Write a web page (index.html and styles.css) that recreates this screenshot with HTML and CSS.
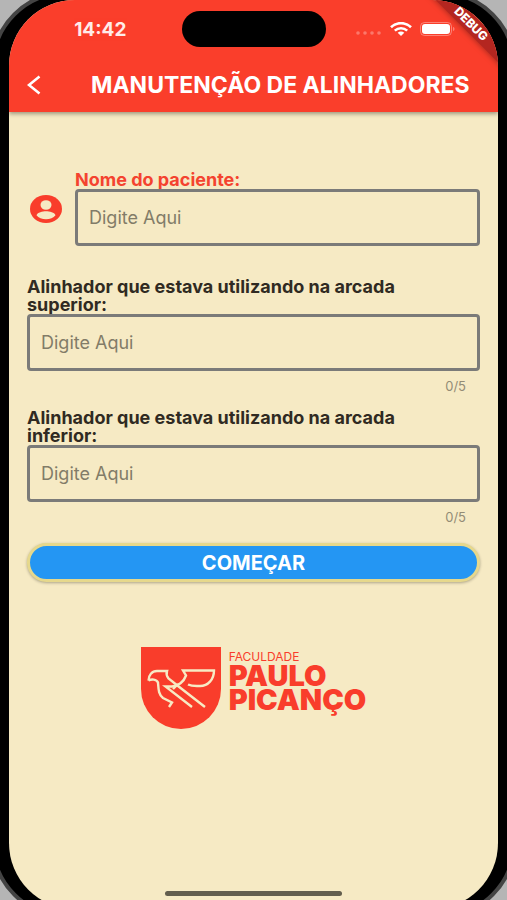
FILE: index.html
```html
<!doctype html>
<html lang="pt-BR">
  <head>
    <meta charset="UTF-8" />
    <meta name="viewport" content="width=device-width, initial-scale=1.0" />
    <title>Manutenção de Alinhadores</title>
    <link rel="stylesheet" href="styles.css">
  </head>
  <body>
    <div class="phone">
      <div class="screen">
        <header class="app-bar">
          <div class="status-bar">
            <span class="time">14:42</span>
            <div class="island"></div>
            <div class="status-icons">
              <svg class="signal" viewBox="0 0 26 4" width="26" height="4">
                <g fill="#fff" opacity="0.3">
                  <circle cx="2" cy="2" r="1.8" />
                  <circle cx="9" cy="2" r="1.8" />
                  <circle cx="16" cy="2" r="1.8" />
                  <circle cx="23" cy="2" r="1.8" />
                </g>
              </svg>
              <svg viewBox="0 0 22 14" width="22" height="14">
                <g fill="none" stroke="#fff" stroke-width="2.6">
                  <path d="M1 5.2C6.5-.2 15.500-.2 21 5.200" />
                  <path d="M4.800 8.600c3.500-3.200 8.900-3.200 12.400 0" />
                </g>
                <path d="M11 14l-3.300-3.200c1.800-1.600 4.800-1.600 6.600 0z" fill="#fff" />
              </svg>
              <svg viewBox="0 0 36 14" width="36" height="14">
                <rect x="0.500" y="0.500" width="31" height="13" rx="4" fill="none" stroke="#fff" opacity="0.35" />
                <rect x="2" y="2" width="28" height="10" rx="3" fill="#fff" />
                <path d="M33 5c2 .5 2 3.500 0 4z" fill="#fff" opacity="0.35" />
              </svg>
            </div>
          </div>
          <div class="toolbar">
            <button class="back" aria-label="Voltar">
              <svg viewBox="0 0 14 20" width="14" height="20">
                <path d="M12.500 1.500L2 10l10.500 8.500" fill="none" stroke="#fff" stroke-width="2.600" />
              </svg>
            </button>
            <h1>MANUTENÇÃO DE ALINHADORES</h1>
          </div>
          <div class="debug">DEBUG</div>
        </header>

        <main class="content">
          <form class="form">
            <div class="patient">
              <svg class="avatar" viewBox="0 0 32 28" width="32" height="28">
                <ellipse cx="16" cy="14" rx="16" ry="14" fill="#f93d2b" />
                <ellipse cx="16" cy="10" rx="5.500" ry="4.800" fill="#f6eac4" />
                <path d="M6.500 20.200c1-3 6-4 9.500-4s8.500 1 9.500 4c-2 2.500-5.500 4-9.500 4s-7.500-1.500-9.500-4z" fill="#f6eac4" />
              </svg>
              <div class="field">
                <label class="red" for="paciente">Nome do paciente:</label>
                <input type="text" id="paciente" placeholder="Digite Aqui" />
              </div>
            </div>
            <div class="field">
              <label for="superior">Alinhador que estava utilizando na arcada superior:</label>
              <input type="text" id="superior" maxlength="5" placeholder="Digite Aqui" />
              <span class="counter">0/5</span>
            </div>
            <div class="field">
              <label for="inferior">Alinhador que estava utilizando na arcada inferior:</label>
              <input type="text" id="inferior" maxlength="5" placeholder="Digite Aqui" />
              <span class="counter">0/5</span>
            </div>
            <button type="button" class="start">COMEÇAR</button>
          </form>

          <div class="logo">
            <svg viewBox="0 0 80 82" width="80" height="82">
              <path d="M0 0h80v42a40 40 0 0 1-80 0z" fill="#f93d2b" />
              <g fill="none" stroke="#f7eac4" stroke-width="2.400">
                <path d="M7.500 33.500C7.500 28 11 24 16 24h10c-1 3-.5 5 1.500 7.500L37 39l27 21" />
                <path d="M7.500 33.500c3-1.500 8-1.500 9.500 2 .5 7 .5 12 5 15.500l9 4.500-3 4.500" />
                <path d="M51 60L24.500 39.500h6.500c6 0 12-5 14-11l-3-5h31c0 9-6 15.500-14 15.500-4 0-8 .5-12-1.500" />
                <path d="M37 37l-5 5" />
              </g>
            </svg>
            <div class="logo-text">
              <span class="logo-small">FACULDADE</span>
              <span class="logo-big">PAULO</span>
              <span class="logo-big">PICANÇO</span>
            </div>
          </div>
        </main>
        <div class="home-indicator"></div>
      </div>
    </div>
  </body>
</html>
```
FILE: styles.css
```css
* {
  box-sizing: border-box;
}
body {
  margin: 0;
  height: 100vh;
  overflow: hidden;
  background-color: #b5b5b5;
  font-family: Inter, "Liberation Sans", sans-serif;
}
/* the device is a little larger than the window on every side */
.phone {
  height: calc(100vh + 27px);
  margin: -9px;
  padding: 5px 14px;
  border: 4px solid #444;
  border-radius: 75px;
  background-color: #000;
}
.screen {
  position: relative;
  display: flex;
  flex-direction: column;
  height: 100%;
  border-radius: 66px;
  overflow: hidden;
  background-color: #f6eac4;
}
.app-bar {
  color: #fff;
  background-color: #fa3e2b;
  box-shadow: 0 2px 4px rgba(0, 0, 0, 0.35);
}
.status-bar {
  display: grid;
  grid-template-columns: 1fr 144px 1fr;
  align-items: center;
  height: 58px;
}
.time {
  padding-left: 10px;
  text-align: center;
  font-size: 19px;
  font-weight: 700;
  opacity: 0.9;
}
.island {
  height: 36px;
  border-radius: 18px;
  background-color: #000;
}
.status-icons {
  display: flex;
  align-items: center;
  gap: 8px;
  padding-left: 30px;
}
.signal {
  margin-top: 8px;
}
.toolbar {
  display: flex;
  align-items: center;
  height: 54px;
  padding: 0 18px;
}
.back {
  display: flex;
  padding: 0;
  border: none;
  background: none;
  cursor: pointer;
}
h1 {
  flex: 1;
  margin: 0 0 0 50px;
  font-size: 23px;
  font-weight: 700;
  line-height: 24px;
  white-space: nowrap;
}
.debug {
  position: absolute;
  top: 16px;
  right: -38px;
  width: 130px;
  line-height: 16px;
  text-align: center;
  font-size: 12px;
  font-weight: 800;
  background-color: #b42620;
  box-shadow: 0 0 6px rgba(0, 0, 0, 0.4);
  transform: rotate(45deg);
}
.content {
  flex: 1;
  padding: 59px 18px 0;
}
.form {
  display: flex;
  flex-direction: column;
}
.patient {
  display: flex;
  align-items: center;
  gap: 13px;
  padding-left: 3px;
  margin-bottom: 32px;
}
.field {
  display: flex;
  flex-direction: column;
  flex: 1;
}
label {
  padding-right: 24px;
  font-size: 18px;
  font-weight: 700;
  line-height: 18px;
  color: #302a22;
}
label.red {
  color: #f4432f;
}
input {
  width: 100%;
  height: 57px;
  padding: 0 11px;
  border: 3px solid #7b7b79;
  border-radius: 4px;
  background: none;
  font-family: inherit;
  font-size: 18px;
}
input::placeholder {
  color: #827c68;
  opacity: 1;
}
.counter {
  padding: 7px 14px 0 0;
  margin-bottom: 15px;
  text-align: right;
  font-size: 13px;
  line-height: 16px;
  color: #938c76;
}
.start {
  height: 39px;
  margin-top: 3px;
  border: 3px solid #e6d88c;
  border-radius: 20px;
  background-color: #2496f3;
  box-shadow: 0 1px 3px rgba(0, 0, 0, 0.3);
  color: #fff;
  font-family: inherit;
  font-size: 20px;
  font-weight: 700;
  cursor: pointer;
}
.logo {
  display: flex;
  justify-content: center;
  gap: 8px;
  margin-top: 65px;
}
.logo-text {
  display: flex;
  flex-direction: column;
  padding-top: 3px;
  color: #f93d2b;
}
.logo-small {
  font-size: 12px;
  line-height: 14px;
}
.logo-big {
  font-size: 29px;
  font-weight: 900;
  line-height: 24px;
}
.home-indicator {
  width: 36%;
  height: 5px;
  margin: 0 auto 13px;
  border-radius: 3px;
  background-color: #635e4d;
}
```
